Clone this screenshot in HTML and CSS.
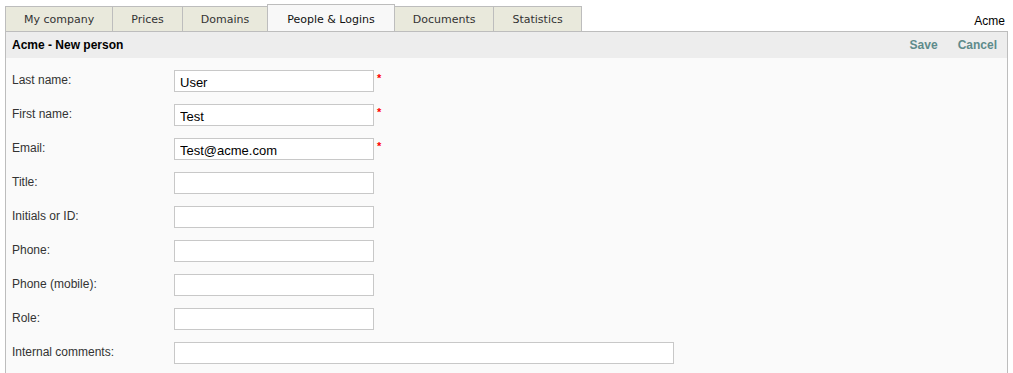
FILE: index.html
```html
<!DOCTYPE html>
<html>
<head>
<meta charset="utf-8">
<link rel="stylesheet" href="styles.css">
</head>
<body>
<div class="top">
  <div class="tabs">
    <div class="tab">My company</div>
    <div class="tab">Prices</div>
    <div class="tab">Domains</div>
    <div class="tab active">People &amp; Logins</div>
    <div class="tab">Documents</div>
    <div class="tab">Statistics</div>
  </div>
  <div class="company">Acme</div>
</div>
<div class="panel">
  <div class="header">
    <div class="title">Acme - New person</div>
    <div class="actions"><a class="action">Save</a><a class="action">Cancel</a></div>
  </div>
  <form class="form">
    <div class="row"><label class="label">Last name:</label><input class="field" value="User"><span class="req">*</span></div>
    <div class="row"><label class="label">First name:</label><input class="field" value="Test"><span class="req">*</span></div>
    <div class="row"><label class="label">Email:</label><input class="field" value="Test@acme.com"><span class="req">*</span></div>
    <div class="row"><label class="label">Title:</label><input class="field"></div>
    <div class="row"><label class="label">Initials or ID:</label><input class="field"></div>
    <div class="row"><label class="label">Phone:</label><input class="field"></div>
    <div class="row"><label class="label">Phone (mobile):</label><input class="field"></div>
    <div class="row"><label class="label">Role:</label><input class="field"></div>
    <div class="row"><label class="label">Internal comments:</label><input class="field wide"></div>
    <div class="row"><label class="label"></label></div>
  </form>
</div>
</body>
</html>
```

FILE: styles.css
```css
html, body {
  margin: 0;
  padding: 0;
  background: #fff;
  font-family: "Liberation Sans", Arial, sans-serif;
  overflow: hidden;
}
.top {
  display: flex;
  justify-content: space-between;
  align-items: flex-end;
  height: 31px;
  padding: 0 8px 0 5px;
}
.tabs {
  display: flex;
  align-items: flex-end;
}
.tab {
  font-family: "DejaVu Sans", Verdana, sans-serif;
  font-size: 11px;
  color: #333;
  background: #e9e9dc;
  border: 1px solid #bdbdbd;
  border-bottom: none;
  height: 24px;
  line-height: 26px;
  padding: 0 18px;
  margin-left: -1px;
}
.tab:first-child {
  margin-left: 0;
}
.tab.active {
  background: #f8f8f8;
  color: #111;
  height: 26px;
  line-height: 30px;
  padding: 0 19px;
}
.company {
  font-size: 12px;
  color: #000;
  padding-bottom: 3px;
}
.panel {
  margin: 0 5px 0 5px;
  border: 1px solid #bdbdbd;
  background: #fafafa;
}
.header {
  display: flex;
  justify-content: space-between;
  align-items: center;
  height: 26px;
  background: #ededed;
  padding: 0 10px 0 6px;
}
.title {
  font-weight: bold;
  font-size: 12px;
  color: #000;
}
.actions {
  display: flex;
  gap: 20px;
}
.action {
  font-weight: bold;
  font-size: 12px;
  color: #5e8b8b;
}
.form {
  display: flex;
  flex-direction: column;
  gap: 12px;
  padding: 12px 0 0 6px;
}
.row {
  display: flex;
  align-items: center;
  height: 22px;
}
.label {
  width: 162px;
  font-size: 12px;
  color: #333;
  margin-top: -3px;
}
.field {
  box-sizing: border-box;
  width: 200px;
  height: 22px;
  border: 1px solid #c8c8c8;
  background: #fff;
  padding: 2px 5px 0;
  margin: 0;
  font-family: "Liberation Sans", Arial, sans-serif;
  font-size: 13px;
  color: #000;
  outline: none;
}
.field.wide {
  width: 500px;
}
.req {
  color: #f00;
  font-size: 11px;
  font-weight: bold;
  margin-left: 3px;
  align-self: flex-start;
  margin-top: 2px;
}
```
